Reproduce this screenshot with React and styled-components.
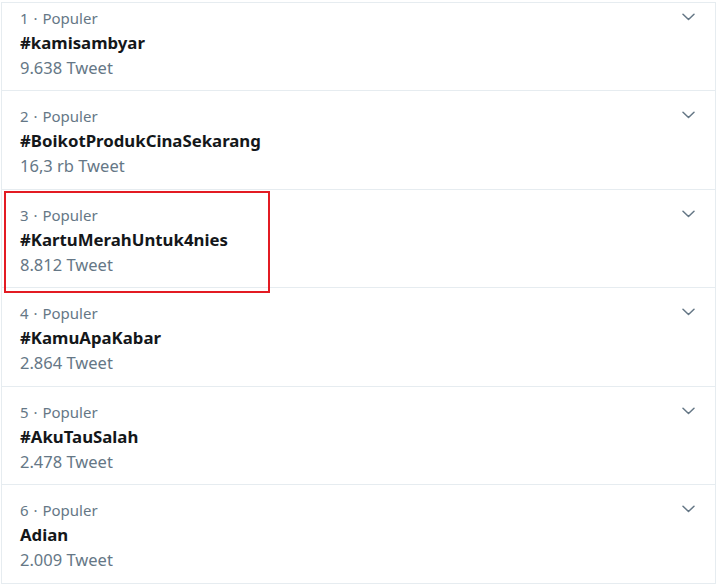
import styled, { createGlobalStyle } from "styled-components";

const GlobalStyle = createGlobalStyle`
  html, body {
    margin: 0;
    padding: 0;
    background: #ffffff;
  }
  body {
    font-family: "Noto Sans", "Open Sans", Arial, sans-serif;
  }
`;

const Page = styled.div`
  width: 720px;
  height: 587px;
  overflow: hidden;
  background: #ffffff;
  padding: 2px 0 0 1px;
  box-sizing: border-box;
`;

const TrendList = styled.ul`
  list-style: none;
  margin: 0;
  padding: 0;
  width: 715px;
  box-sizing: border-box;
  border: 1px solid #e6ecf0;
  border-bottom: none;
`;

const TrendRow = styled.li`
  position: relative;
  display: flex;
  justify-content: space-between;
  align-items: flex-start;
  height: ${(p) => (p.$first ? "88px" : "98.5px")};
  box-sizing: border-box;
  padding: ${(p) => (p.$first ? "3px" : "13px")} 20px 0 18px;
  border-bottom: 1px solid #e6ecf0;
`;

const TrendInfo = styled.div`
  display: flex;
  flex-direction: column;
`;

const Meta = styled.span`
  font-size: 15px;
  line-height: 25px;
  color: #657786;
  word-spacing: 1px;
`;

const Name = styled.span`
  font-size: 16.8px;
  line-height: 24px;
  font-weight: 700;
  color: #14171a;
`;

const Count = styled.span`
  font-size: 16.5px;
  line-height: 25px;
  color: #657786;
`;

const Chevron = styled.svg`
  width: 13px;
  height: 8px;
  margin-top: ${(p) => (p.$first ? "7px" : "7px")};
  flex-shrink: 0;
`;

const Highlight = styled.div`
  position: absolute;
  left: 2px;
  top: 1px;
  width: 266px;
  height: 102px;
  box-sizing: border-box;
  border: 2px solid #e31b23;
  pointer-events: none;
`;

const trends = [
  { rank: 1, name: "#kamisambyar", count: "9.638 Tweet" },
  { rank: 2, name: "#BoikotProdukCinaSekarang", count: "16,3 rb Tweet" },
  { rank: 3, name: "#KartuMerahUntuk4nies", count: "8.812 Tweet", marked: true },
  { rank: 4, name: "#KamuApaKabar", count: "2.864 Tweet" },
  { rank: 5, name: "#AkuTauSalah", count: "2.478 Tweet" },
  { rank: 6, name: "Adian", count: "2.009 Tweet" },
];

export default function App() {
  return (
    <>
      <GlobalStyle />
      <Page>
        <TrendList>
          {trends.map((t, idx) => (
            <TrendRow key={t.rank} $first={idx === 0}>
              <TrendInfo>
                <Meta>{`${t.rank} · Populer`}</Meta>
                <Name>{t.name}</Name>
                <Count>{t.count}</Count>
              </TrendInfo>
              <Chevron viewBox="0 0 13 8" $first={idx === 0}>
                <path
                  d="M1 1.2 L6.5 6.5 L12 1.2"
                  fill="none"
                  stroke="#657786"
                  strokeWidth="1.5"
                  strokeLinecap="round"
                  strokeLinejoin="round"
                />
              </Chevron>
              {t.marked && <Highlight />}
            </TrendRow>
          ))}
        </TrendList>
      </Page>
    </>
  );
}
